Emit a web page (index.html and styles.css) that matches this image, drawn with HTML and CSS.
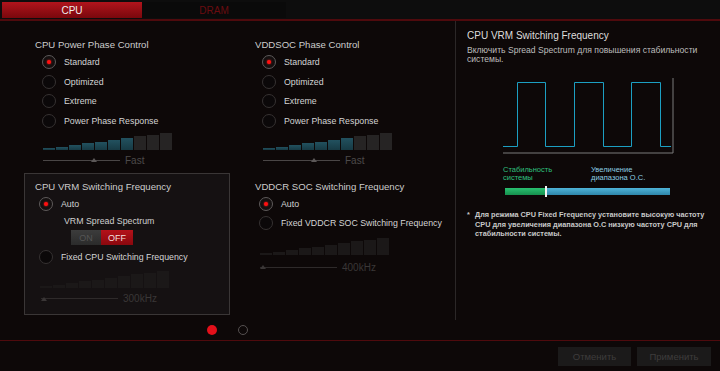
FILE: index.html
```html
<!DOCTYPE html>
<html>
<head>
<meta charset="utf-8">
<link rel="stylesheet" href="styles.css">
</head>
<body>
<div class="app">
  <header class="tabs">
    <div class="tab active">CPU</div>
    <div class="tab dram">DRAM</div>
  </header>
  <main class="main">
    <section class="settings">
      <div class="grid">
        <div class="group top">
          <div class="title">CPU Power Phase Control</div>
          <div class="radios">
            <div class="row"><span class="radio sel"></span><span>Standard</span></div>
            <div class="row"><span class="radio"></span><span>Optimized</span></div>
            <div class="row"><span class="radio"></span><span>Extreme</span></div>
            <div class="row"><span class="radio"></span><span>Power Phase Response</span></div>
          </div>
          <div class="bars b-top"><span class="on"></span><span class="on"></span><span class="on"></span><span class="on"></span><span class="on"></span><span class="on"></span><span class="on"></span><span></span><span></span><span></span></div>
          <div class="axis a-top"><span class="line"></span><span class="thumb mid"></span><span class="val">Fast</span></div>
        </div>
        <div class="group top">
          <div class="title">VDDSOC Phase Control</div>
          <div class="radios">
            <div class="row"><span class="radio sel"></span><span>Standard</span></div>
            <div class="row"><span class="radio"></span><span>Optimized</span></div>
            <div class="row"><span class="radio"></span><span>Extreme</span></div>
            <div class="row"><span class="radio"></span><span>Power Phase Response</span></div>
          </div>
          <div class="bars b-top"><span class="on"></span><span class="on"></span><span class="on"></span><span class="on"></span><span class="on"></span><span class="on"></span><span class="on"></span><span></span><span></span><span></span></div>
          <div class="axis a-top"><span class="line"></span><span class="thumb mid"></span><span class="val">Fast</span></div>
        </div>
        <div class="group low box">
          <div class="title">CPU VRM Switching Frequency</div>
          <div class="radios low-radios">
            <div class="row"><span class="radio sel"></span><span>Auto</span></div>
          </div>
          <div class="sub">VRM Spread Spectrum</div>
          <div class="toggle"><span class="t-on">ON</span><span class="t-off">OFF</span></div>
          <div class="radios low-radios fixed">
            <div class="row"><span class="radio"></span><span>Fixed CPU Switching Frequency</span></div>
          </div>
          <div class="bars dis b-box"><span></span><span></span><span></span><span></span><span></span><span></span><span></span><span></span><span></span><span></span></div>
          <div class="axis dis a-box"><span class="line"></span><span class="thumb start"></span><span class="val">300kHz</span></div>
        </div>
        <div class="group low">
          <div class="title">VDDCR SOC Switching Frequency</div>
          <div class="radios low-radios">
            <div class="row"><span class="radio sel"></span><span>Auto</span></div>
            <div class="row"><span class="radio"></span><span>Fixed VDDCR SOC Switching Frequency</span></div>
          </div>
          <div class="bars dis b-soc"><span></span><span></span><span></span><span></span><span></span><span></span><span></span><span></span><span></span><span></span></div>
          <div class="axis dis a-soc"><span class="line"></span><span class="thumb start"></span><span class="val">400kHz</span></div>
        </div>
      </div>
      <div class="pager"><span class="dot cur"></span><span class="dot"></span></div>
    </section>
    <aside class="help">
      <div class="help-title">CPU VRM Switching Frequency</div>
      <div class="help-desc">Включить Spread Spectrum для повышения стабильности<br>системы.</div>
      <svg class="wave" width="175" height="80" viewBox="0 0 175 80">
        <polyline points="3,77 173,77 173,2" fill="none" stroke="#7a7a7a" stroke-width="1"/>
        <polyline points="3,70.5 17.5,70.5 17.5,6.5 45.5,6.5 45.5,70.5 74.5,70.5 74.5,6.5 103.5,6.5 103.5,70.5 131.5,70.5 131.5,6.5 160.5,6.5 160.5,70.5 171,70.5" fill="none" stroke="#1c9fc2" stroke-width="1"/>
      </svg>
      <div class="legend">
        <div class="lg-stab">Стабильность<br>системы</div>
        <div class="lg-oc">Увеличение<br>диапазона О.С.</div>
      </div>
      <div class="range"><span class="r-green"></span><span class="r-blue"></span><span class="r-mark"></span></div>
      <div class="note"><span class="star">*</span><span class="note-text">Для режима CPU Fixed Frequency установите высокую частоту<br>CPU для увеличения диапазона О.С низкую частоту CPU для<br>стабильности системы.</span></div>
    </aside>
  </main>
  <footer class="footer">
    <button class="btn b1">Отменить</button>
    <button class="btn b2">Применить</button>
  </footer>
</div>
</body>
</html>
```

FILE: styles.css
```css
* { box-sizing: border-box; margin: 0; padding: 0; }
html, body { width: 720px; height: 371px; overflow: hidden; }
body {
  background: #0d0808;
  font-family: "Liberation Sans", Arial, sans-serif;
  color: #cfcfcf;
}
.app { display: flex; flex-direction: column; height: 371px; }

/* tabs */
.tabs {
  height: 21px;
  background: #0d0d0d;
  border-bottom: 2px solid #4f0a0d;
  display: flex;
  padding: 2px 0 0 2px;
}
.tab {
  width: 140px;
  height: 16px;
  display: flex;
  align-items: center;
  justify-content: center;
  font-size: 10px;
  color: #6a0c10;
}
.tab.dram { width: 144px; background: #0a0a0a; }
.tab.active {
  background: linear-gradient(#b0141c, #7a080d);
  color: #eeeeee;
}

/* main */
.main { display: flex; height: 319px; }
.settings { width: 455px; display: flex; flex-direction: column; }
.grid {
  display: grid;
  grid-template-columns: 206px 211px;
  column-gap: 14px;
  row-gap: 6px;
  padding-left: 24px;
  align-items: start;
}
.group.top { padding: 18px 11px 0; }
.group.low { padding: 7px 10px 8.5px; border: 1px solid transparent; }
.group.box { border-color: #3a3636; background: #151112; }

.title { font-size: 9.6px; line-height: 12px; color: #cccccc; white-space: nowrap; }
.radios { margin-top: 1.5px; }
.row {
  height: 19.5px;
  display: flex;
  align-items: center;
  gap: 8px;
  padding-left: 7px;
  font-size: 8.8px;
  color: #d4d4d4;
  white-space: nowrap;
}
.low-radios .row { height: 19px; padding-left: 4px; }
.radio {
  width: 14px;
  height: 14px;
  border-radius: 50%;
  border: 1px solid #363232;
  background: #0b0809;
  flex: none;
  display: flex;
  align-items: center;
  justify-content: center;
}
.radio.sel { border-color: #5e5a5a; background: #141010; }
.radio.sel::after {
  content: "";
  width: 4px;
  height: 4px;
  border-radius: 50%;
  background: #ff1010;
  box-shadow: 0 0 2px #ff2020;
}

.sub { margin-top: 2px; padding-left: 29px; font-size: 8.8px; line-height: 11px; color: #d0d0d0; }
.toggle {
  margin: 3.5px 0 0 36px;
  display: flex;
  width: 62px;
  height: 15px;
  font-size: 9px;
}
.t-on {
  width: 30px;
  display: flex; align-items: center; justify-content: center;
  background: linear-gradient(#3c3c3c, #2b2b2b);
  color: #555555;
}
.t-off {
  width: 32px;
  display: flex; align-items: center; justify-content: center;
  background: linear-gradient(#b4121a, #8a080e);
  color: #f3dede;
}
.fixed { margin-top: 2.5px; }

/* bar sliders */
.bars {
  display: flex;
  align-items: flex-end;
  gap: 1px;
  height: 17px;
}
.bars span { width: 12px; background: #262424; }
.bars span.on { background: linear-gradient(#22515f, #173a44); }
.bars span:nth-child(1) { height: 1.7px; }
.bars span:nth-child(2) { height: 3.4px; }
.bars span:nth-child(3) { height: 5.1px; }
.bars span:nth-child(4) { height: 6.8px; }
.bars span:nth-child(5) { height: 8.5px; }
.bars span:nth-child(6) { height: 10.2px; }
.bars span:nth-child(7) { height: 11.9px; }
.bars span:nth-child(8) { height: 13.6px; }
.bars span:nth-child(9) { height: 15.3px; }
.bars span:nth-child(10) { height: 17px; }
.bars.dis span { background: #1b1818; }
.b-top { margin: 2.5px 0 0 8px; }
.b-box { margin: 4.5px 0 0 5px; }
.b-soc { margin: 5.5px 0 0 5px; }

.axis {
  position: relative;
  display: flex;
  align-items: center;
  height: 14px;
}
.axis .line { width: 77px; height: 1px; background: #4a4646; }
.axis .val { margin-left: 5px; font-size: 10px; color: #4c4a4a; }
.axis .thumb {
  position: absolute;
  top: 5px;
  border-left: 3px solid transparent;
  border-right: 3px solid transparent;
  border-bottom: 4px solid #5c5858;
}
.thumb.mid { left: 48px; }
.thumb.start { left: 0; }
.axis.dis .line { background: #2e2a2a; }
.axis.dis .val { color: #3a3737; }
.axis.dis .thumb { border-bottom-color: #3a3636; }
.a-top { margin: 3px 0 0 8px; }
.a-box { margin: 3.5px 0 0 6px; }
.a-soc { margin: 5px 0 0 5px; }

.pager {
  margin-top: 10px;
  display: flex;
  justify-content: center;
  gap: 21px;
}
.dot {
  width: 10px;
  height: 10px;
  border-radius: 50%;
  border: 1.5px solid #555050;
}
.dot.cur { border: none; background: #e3101a; }

/* help panel */
.help {
  width: 265px;
  height: 299px;
  border-left: 1px solid #2b2727;
  padding: 9px 0 0 11px;
}
.help-title { font-size: 10px; line-height: 12px; color: #dddddd; white-space: nowrap; }
.help-desc {
  margin-top: 3.5px;
  font-size: 8.6px;
  line-height: 9px;
  color: #bdbdbd;
  white-space: nowrap;
}
.wave { display: block; margin: 12.5px 0 0 33px; }
.legend {
  margin-top: 9.75px;
  display: flex;
  font-size: 7.5px;
  line-height: 8.5px;
  white-space: nowrap;
}
.lg-stab { margin-left: 36px; width: 88px; color: #2fc07e; }
.lg-oc { color: #8ccfe4; }
.range {
  position: relative;
  margin: 5.25px 0 0 38px;
  width: 165px;
  height: 7px;
  display: flex;
}
.r-green { width: 41px; background: linear-gradient(#29c070, #16904e); }
.r-blue { flex: 1; background: linear-gradient(#4fb4d8, #2e86aa); }
.r-mark {
  position: absolute;
  left: 40px;
  top: -2px;
  width: 2px;
  height: 11px;
  background: #f4f4f4;
}
.note {
  margin-top: 15px;
  display: flex;
  gap: 3px;
  font-size: 7.3px;
  line-height: 9.5px;
  color: #c8c8c8;
  font-weight: bold;
  white-space: nowrap;
}
.star { width: 5px; }

/* footer */
.footer {
  height: 31px;
  border-top: 1px solid #4f0a0d;
  display: flex;
  justify-content: flex-end;
  gap: 6px;
  padding: 6px 9px 0 0;
}
.btn {
  height: 19px;
  border: none;
  background: #1b1a1a;
  color: #3e3c3c;
  font-family: "Liberation Sans", Arial, sans-serif;
  font-size: 9.5px;
}
.b1 { width: 73px; }
.b2 { width: 74px; }
```
